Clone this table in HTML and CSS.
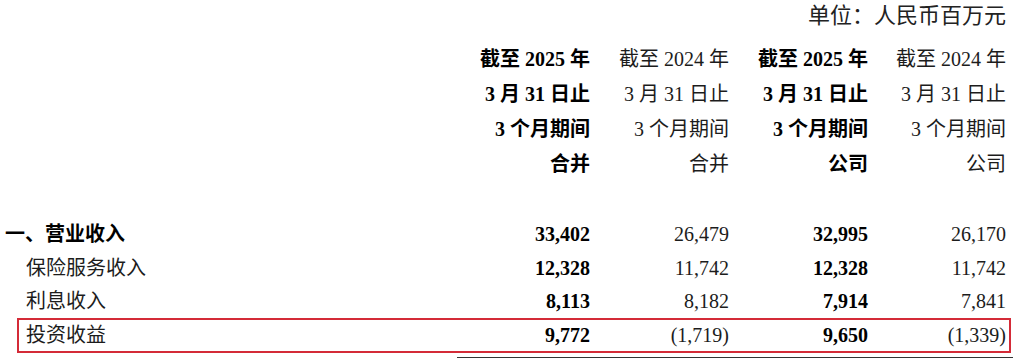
FILE: index.html
```html
<!DOCTYPE html>
<html lang="zh-CN">
<head>
<meta charset="utf-8">
<title>利润表</title>
<link rel="stylesheet" href="styles.css">
</head>
<body>
<div class="page">
  <div class="unit">单位：人民币百万元</div>
  <div class="head">
    <div class="row hrow"><span></span><span class="b">截至 2025 年</span><span>截至 2024 年</span><span class="b">截至 2025 年</span><span>截至 2024 年</span></div>
    <div class="row hrow"><span></span><span class="b">3 月 31 日止</span><span>3 月 31 日止</span><span class="b">3 月 31 日止</span><span>3 月 31 日止</span></div>
    <div class="row hrow"><span></span><span class="b">3 个月期间</span><span>3 个月期间</span><span class="b">3 个月期间</span><span>3 个月期间</span></div>
    <div class="row hrow"><span></span><span class="b">合并</span><span>合并</span><span class="b">公司</span><span>公司</span></div>
  </div>
  <div class="body">
    <div class="row drow"><span class="lbl b">一、营业收入</span><span class="b">33,402</span><span>26,479</span><span class="b">32,995</span><span>26,170</span></div>
    <div class="row drow"><span class="lbl sub">保险服务收入</span><span class="b">12,328</span><span>11,742</span><span class="b">12,328</span><span>11,742</span></div>
    <div class="row drow"><span class="lbl sub">利息收入</span><span class="b">8,113</span><span>8,182</span><span class="b">7,914</span><span>7,841</span></div>
    <div class="row drow hl"><span class="lbl">投资收益</span><span class="b">9,772</span><span>(1,719)</span><span class="b">9,650</span><span>(1,339)</span></div>
  </div>
  <div class="nextbox"></div>
</div>
</body>
</html>
```
FILE: styles.css
```css
html, body {
  margin: 0;
  padding: 0;
  background: #ffffff;
}
body {
  font-family: "Liberation Serif", "Noto Sans CJK SC", serif;
  color: #1c1c1c;
  font-size: 20px;
}
.page {
  width: 1024px;
  height: 358px;
  overflow: hidden;
}
.unit {
  font-size: 22px;
  line-height: 32px;
  text-align: right;
  padding-right: 18px;
  color: #222;
}
.head {
  margin-top: 10px;
}
.row {
  display: grid;
  grid-template-columns: 451px 139px 139px 139px 138px;
  white-space: nowrap;
}
.row > span {
  text-align: right;
}
.row > span.lbl {
  text-align: left;
}
.hrow {
  line-height: 35px;
}
.body {
  margin-top: 35px;
}
.drow {
  line-height: 33px;
}
.drow:first-child {
  line-height: 35px;
}
.b {
  font-weight: bold;
  color: #000;
}
.lbl {
  padding-left: 5px;
}
.lbl.sub {
  padding-left: 26px;
}
.hl {
  margin-left: 17px;
  margin-top: 0;
  width: 994px;
  box-sizing: border-box;
  border: 2px solid #d42b38;
  grid-template-columns: 432px 139px 139px 139px 141px;
  line-height: 31px;
}
.hl .lbl {
  padding-left: 7px;
}
.hl > span:last-child {
  padding-right: 3px;
}
.nextbox {
  margin-left: 457px;
  margin-top: 4px;
  width: 556px;
  height: 20px;
  box-sizing: border-box;
  border: 1px solid #333;
}
```
